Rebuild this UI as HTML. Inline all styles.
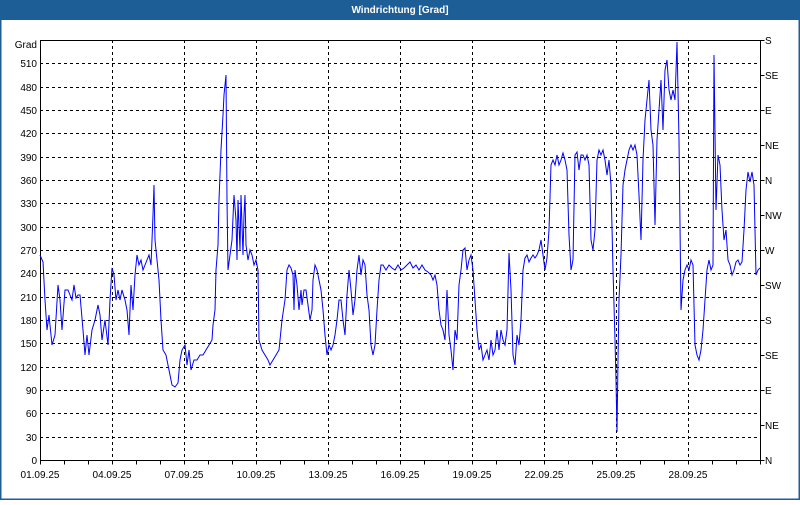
<!DOCTYPE html>
<html><head><meta charset="utf-8"><style>
body{margin:0;width:800px;height:500px;overflow:hidden;background:#fff;font-family:"Liberation Sans",Tahoma,sans-serif}
</style></head><body>
<svg width="800" height="500" xmlns="http://www.w3.org/2000/svg" font-family="Liberation Sans, sans-serif" font-size="10">
<rect x="0" y="0" width="800" height="500" fill="#fff"/>
<rect x="0" y="0" width="800" height="20" fill="#1d5e97"/>
<rect x="0" y="0" width="1.5" height="500" fill="#1d5e97"/>
<rect x="798.5" y="0" width="1.5" height="500" fill="#1d5e97"/>
<rect x="0" y="498.5" width="800" height="1.5" fill="#1d5e97"/>
<text x="400" y="13" fill="#fff" font-weight="bold" font-size="10" text-anchor="middle">Windrichtung [Grad]</text>
<g stroke="#000" stroke-dasharray="3,3" stroke-width="1" fill="none">
<path d="M40 437.5H760M40 413.5H760M40 390.5H760M40 367.5H760M40 343.5H760M40 320.5H760M40 297.5H760M40 273.5H760M40 250.5H760M40 227.5H760M40 203.5H760M40 180.5H760M40 157.5H760M40 133.5H760M40 110.5H760M40 87.5H760M40 63.5H760"/>
<path d="M112.5 40V460M184.5 40V460M256.5 40V460M328.5 40V460M400.5 40V460M472.5 40V460M544.5 40V460M616.5 40V460M688.5 40V460"/>
</g>
<g text-anchor="end" fill="#000">
<text x="37" y="48">Grad</text>
<text x="37" y="67">510</text><text x="37" y="91">480</text><text x="37" y="114">450</text><text x="37" y="137">420</text><text x="37" y="161">390</text><text x="37" y="184">360</text><text x="37" y="207">330</text><text x="37" y="231">300</text><text x="37" y="254">270</text><text x="37" y="277">240</text><text x="37" y="301">210</text><text x="37" y="324">180</text><text x="37" y="347">150</text><text x="37" y="371">120</text><text x="37" y="394">90</text><text x="37" y="417">60</text><text x="37" y="441">30</text><text x="37" y="464">0</text>
</g>
<g text-anchor="middle" fill="#000">
<text x="40" y="478">01.09.25</text><text x="112" y="478">04.09.25</text><text x="184" y="478">07.09.25</text><text x="256" y="478">10.09.25</text><text x="328" y="478">13.09.25</text><text x="400" y="478">16.09.25</text><text x="472" y="478">19.09.25</text><text x="544" y="478">22.09.25</text><text x="616" y="478">25.09.25</text><text x="688" y="478">28.09.25</text>
</g>
<g fill="#000">
<text x="765" y="44">S</text><text x="765" y="79">SE</text><text x="765" y="114">E</text><text x="765" y="149">NE</text><text x="765" y="184">N</text><text x="765" y="219">NW</text><text x="765" y="254">W</text><text x="765" y="289">SW</text><text x="765" y="324">S</text><text x="765" y="359">SE</text><text x="765" y="394">E</text><text x="765" y="429">NE</text><text x="765" y="464">N</text>
</g>
<line x1="40" y1="462.5" x2="762" y2="462.5" stroke="#000" stroke-width="4" stroke-dasharray="1,23"/>
<line x1="762.5" y1="40" x2="762.5" y2="462" stroke="#000" stroke-width="4" stroke-dasharray="1,34"/>
<line x1="40.5" y1="40" x2="40.5" y2="460" stroke="#000"/>
<line x1="40" y1="40.5" x2="760" y2="40.5" stroke="#000"/>
<line x1="40" y1="460.5" x2="761" y2="460.5" stroke="#000"/>
<line x1="760.5" y1="40" x2="760.5" y2="461" stroke="#000"/>
<polyline fill="none" stroke="#0000ff" stroke-width="1" points="40,255 43,262 45,300 47,330 49,315 52,345 55,335 58,285 60,300 62,330 65,290 68,290 70,295 72,300 74,285 76,298 78,295 80,295 83,330 85,355 87,335 89,355 92,330 95,320 98,305 100,315 102,340 105,320 108,345 110,300 112,268 114,275 116,300 118,290 120,300 122,290 125,300 127,310 129,335 131,285 133,310 135,275 137,255 139,265 141,260 143,270 145,265 147,260 149,255 151,265 153,215 154,185 155,240 157,260 159,280 161,320 163,350 166,355 169,370 172,385 175,387 178,383 180,360 182,350 185,345 187,365 189,350 191,370 194,360 197,360 200,355 203,355 206,350 209,345 212,340 213,325 215,310 216,270 218,245 219,200 221,150 223,115 224,95 225,85 226,75 227,200 228,270 230,255 232,240 234,195 236,220 237,260 238,200 240,250 241,195 243,255 244,215 245,195 246,245 248,260 250,250 252,255 254,265 256,260 258,270 259,340 262,350 265,355 268,360 270,365 273,360 276,355 279,350 282,320 285,300 287,270 289,265 291,268 293,275 294,310 295,270 297,285 299,310 301,290 302,305 304,290 306,290 308,305 310,320 312,310 313,280 315,265 317,270 319,280 321,290 323,310 325,335 327,355 329,345 331,350 333,345 335,335 337,320 339,300 341,300 343,320 345,335 347,295 349,270 351,290 353,315 355,300 357,270 359,255 361,275 363,260 365,265 367,295 369,310 371,345 373,355 375,345 377,310 379,280 381,265 383,265 386,270 389,265 392,268 395,270 398,265 401,270 404,268 407,265 410,262 413,268 416,265 419,270 422,265 425,270 428,272 431,275 433,280 435,275 437,285 439,310 441,325 443,330 445,340 447,290 449,335 451,350 453,370 455,330 457,340 459,285 461,270 463,250 465,248 467,270 469,260 471,255 473,270 475,300 477,330 479,350 481,345 483,360 485,355 487,350 489,360 491,340 493,355 495,350 497,330 499,350 501,330 503,340 505,345 507,330 509,253 511,290 513,355 515,365 517,335 519,345 521,320 523,270 525,258 527,255 529,262 531,258 533,255 535,258 537,255 539,250 541,240 543,255 545,270 547,258 549,230 551,165 553,160 555,165 557,155 559,165 561,160 563,153 565,160 567,170 569,235 571,270 573,260 575,155 577,152 579,170 581,155 583,155 585,160 587,155 589,165 591,240 593,250 595,230 597,160 599,150 601,155 603,150 605,160 607,175 609,160 611,185 613,270 615,340 616,380 617,432 618,360 619,300 621,255 623,185 625,170 627,160 629,150 631,145 633,150 635,145 637,155 639,195 641,240 643,160 645,120 647,100 649,80 651,130 653,145 655,225 657,140 659,110 661,80 663,130 665,70 667,60 669,90 671,100 673,90 675,100 677,42 679,140 681,310 683,280 685,270 687,265 689,270 691,260 693,265 695,345 697,355 699,360 701,350 703,330 705,300 707,270 709,260 711,270 713,265 714,55 716,210 718,155 720,165 722,210 724,240 726,230 728,260 730,265 732,275 734,270 736,262 738,260 740,265 742,262 744,230 746,190 748,172 750,182 752,172 754,185 756,275 758,270 760,268"/>
</svg>
</body></html>
